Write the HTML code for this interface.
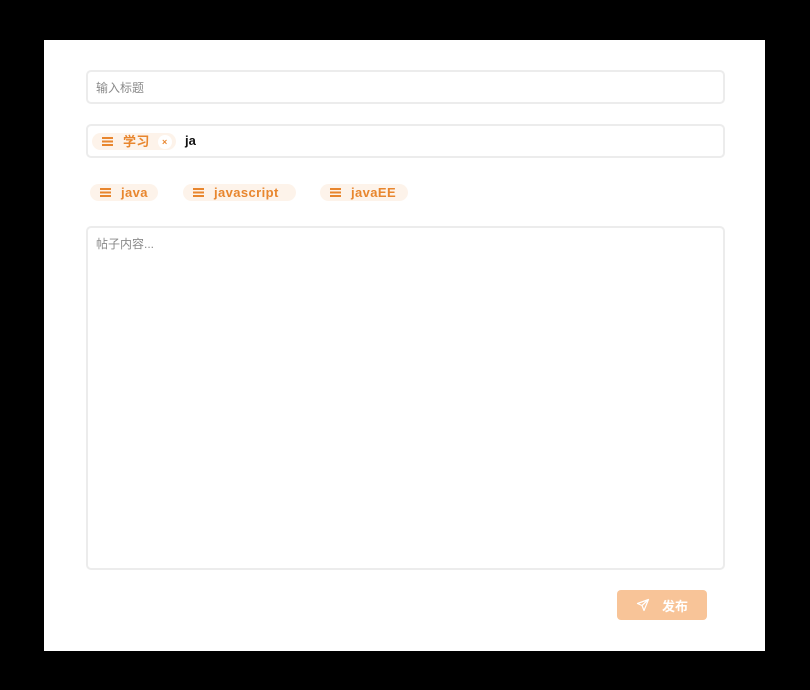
<!DOCTYPE html>
<html><head><meta charset="utf-8"><style>
*{box-sizing:border-box;margin:0;padding:0}
body{width:810px;height:690px;background:#000;position:relative;overflow:hidden;font-family:"Liberation Sans","Noto Sans CJK SC",sans-serif}
.panel{position:absolute;left:44px;top:40px;width:721px;height:611px;background:#fff}
.box{position:absolute;left:86px;width:639px;border:2px solid #ececec;border-radius:5px;background:#fff}
.ph{position:absolute;left:8px;font-size:12px;color:#8a8a8a}
.chip{position:absolute;height:17px;border-radius:9px;background:#fdf3ea;color:#e8862e;font-weight:bold;font-size:13px;letter-spacing:0.4px;line-height:17px;display:flex;align-items:center}
.ic{display:inline-block;width:11px;height:9px;margin-right:10px;background:linear-gradient(#e8862e 0 2px,transparent 2px 3.5px,#e8862e 3.5px 5.5px,transparent 5.5px 7px,#e8862e 7px 9px);}
.btn{position:absolute;left:617px;top:590px;width:90px;height:30px;border-radius:4px;background:#f8c498;color:#fff;font-size:13px;font-weight:bold;display:flex;align-items:center;justify-content:center}
</style></head><body>
<div class="panel"></div>
<div class="box" style="top:70px;height:34px"><span class="ph" style="top:7px">输入标题</span></div>
<div class="box" style="top:124px;height:34px">
 <div class="chip" style="left:4px;top:7px;width:84px;padding-left:10px"><span class="ic"></span>学习<span style="display:inline-block;width:14px;height:14px;border-radius:7px;background:#fff;margin-left:8px;font-size:9px;line-height:14px;text-align:center">×</span></div>
 <span style="position:absolute;left:97px;top:7px;font-size:13px;font-weight:bold;color:#111">ja</span>
</div>
<div class="chip" style="left:90px;top:184px;width:68px;padding-left:10px"><span class="ic"></span>java</div>
<div class="chip" style="left:183px;top:184px;width:113px;padding-left:10px"><span class="ic"></span>javascript</div>
<div class="chip" style="left:320px;top:184px;width:88px;padding-left:10px"><span class="ic"></span>javaEE</div>
<div class="box" style="top:226px;height:344px"><span class="ph" style="top:7px">帖子内容...</span></div>
<div class="btn"><svg width="14" height="14" viewBox="0 0 14 14" style="margin-right:12px"><path d="M12.5 1.5L1.5 5.5L6 7.5L8 12.5Z M6 7.5L12.5 1.5" fill="none" stroke="#fff" stroke-width="1.2" stroke-linejoin="round"/></svg>发布</div>
</body></html>
